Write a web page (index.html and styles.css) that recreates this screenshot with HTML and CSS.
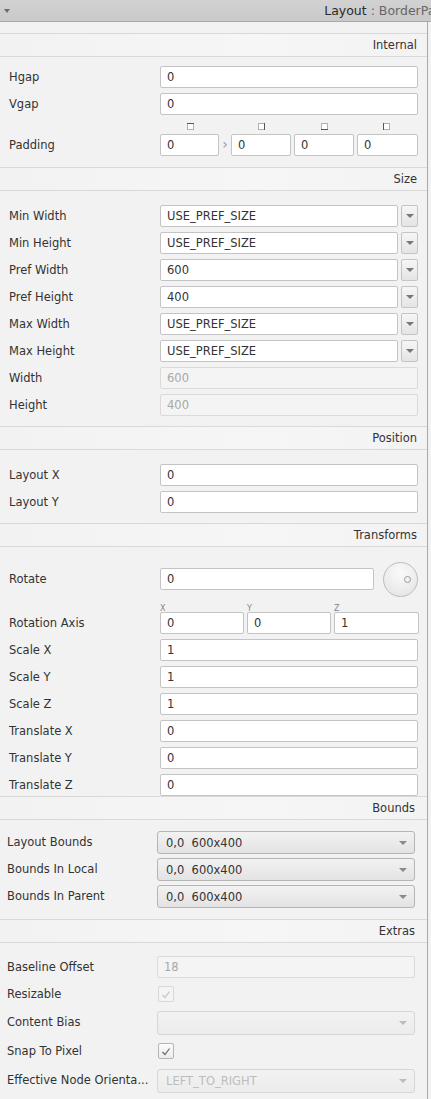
FILE: index.html
```html
<!DOCTYPE html>
<html>
<head>
<meta charset="utf-8">
<link rel="stylesheet" href="styles.css">
</head>
<body>
<div class="titlebar">
  <span class="tri"></span>
  <span class="title"><span class="t-main">Layout</span><span class="t-sub"> : BorderPane</span></span>
</div>
<div class="panel top">
  <div class="sec"><span>Internal</span></div>
  <div class="rows first-rows">
    <div class="row"><span class="lbl">Hgap</span><div class="field"><span class="tf">0</span></div></div>
    <div class="row"><span class="lbl">Vgap</span><div class="field"><span class="tf">0</span></div></div>
    <div class="pad-icons">
      <svg width="7" height="7"><rect x="0.5" y="0.5" width="6" height="6" fill="#fff" stroke="#b0b0b0"/><line x1="0" y1="0.5" x2="7" y2="0.5" stroke="#555"/></svg>
      <svg width="7" height="7"><rect x="0.5" y="0.5" width="6" height="6" fill="#fff" stroke="#b0b0b0"/><line x1="6.5" y1="0" x2="6.5" y2="7" stroke="#555"/></svg>
      <svg width="7" height="7"><rect x="0.5" y="0.5" width="6" height="6" fill="#fff" stroke="#b0b0b0"/><line x1="0" y1="6.5" x2="7" y2="6.5" stroke="#555"/></svg>
      <svg width="7" height="7"><rect x="0.5" y="0.5" width="6" height="6" fill="#fff" stroke="#b0b0b0"/><line x1="0.5" y1="0" x2="0.5" y2="7" stroke="#555"/></svg>
    </div>
    <div class="row"><span class="lbl">Padding</span>
      <div class="field padding">
        <span class="tf">0</span><span class="chev">›</span><span class="tf">0</span><span class="tf">0</span><span class="tf">0</span>
      </div>
    </div>
  </div>

  <div class="sec"><span>Size</span></div>
  <div class="rows">
    <div class="row"><span class="lbl">Min Width</span><div class="field combo-ed"><span class="tf">USE_PREF_SIZE</span><span class="dd"></span></div></div>
    <div class="row"><span class="lbl">Min Height</span><div class="field combo-ed"><span class="tf">USE_PREF_SIZE</span><span class="dd"></span></div></div>
    <div class="row"><span class="lbl">Pref Width</span><div class="field combo-ed"><span class="tf">600</span><span class="dd"></span></div></div>
    <div class="row"><span class="lbl">Pref Height</span><div class="field combo-ed"><span class="tf">400</span><span class="dd"></span></div></div>
    <div class="row"><span class="lbl">Max Width</span><div class="field combo-ed"><span class="tf">USE_PREF_SIZE</span><span class="dd"></span></div></div>
    <div class="row"><span class="lbl">Max Height</span><div class="field combo-ed"><span class="tf">USE_PREF_SIZE</span><span class="dd"></span></div></div>
    <div class="row"><span class="lbl">Width</span><div class="field"><span class="tf dis">600</span></div></div>
    <div class="row"><span class="lbl">Height</span><div class="field"><span class="tf dis">400</span></div></div>
  </div>

  <div class="sec"><span>Position</span></div>
  <div class="rows">
    <div class="row"><span class="lbl">Layout X</span><div class="field"><span class="tf">0</span></div></div>
    <div class="row"><span class="lbl">Layout Y</span><div class="field"><span class="tf">0</span></div></div>
  </div>

  <div class="sec"><span>Transforms</span></div>
  <div class="rows rot">
    <div class="row rotate"><span class="lbl">Rotate</span>
      <div class="field knobrow"><span class="tf">0</span><span class="knob"><span class="dot"></span></span></div>
    </div>
    <div class="axis-lbls"><span>X</span><span>Y</span><span>Z</span></div>
    <div class="row tight"><span class="lbl">Rotation Axis</span>
      <div class="field axis"><span class="tf">0</span><span class="tf">0</span><span class="tf">1</span></div>
    </div>
    <div class="row"><span class="lbl">Scale X</span><div class="field"><span class="tf">1</span></div></div>
    <div class="row"><span class="lbl">Scale Y</span><div class="field"><span class="tf">1</span></div></div>
    <div class="row"><span class="lbl">Scale Z</span><div class="field"><span class="tf">1</span></div></div>
    <div class="row"><span class="lbl">Translate X</span><div class="field"><span class="tf">0</span></div></div>
    <div class="row"><span class="lbl">Translate Y</span><div class="field"><span class="tf">0</span></div></div>
    <div class="row"><span class="lbl">Translate Z</span><div class="field"><span class="tf">0</span></div></div>
  </div>
</div>

<div class="panel bottom">
  <div class="sec"><span>Bounds</span></div>
  <div class="rows bounds">
    <div class="row"><span class="lbl">Layout Bounds</span><div class="field"><span class="combo">0,0&nbsp; 600x400<span class="arr"></span></span></div></div>
    <div class="row"><span class="lbl">Bounds In Local</span><div class="field"><span class="combo">0,0&nbsp; 600x400<span class="arr"></span></span></div></div>
    <div class="row"><span class="lbl">Bounds In Parent</span><div class="field"><span class="combo">0,0&nbsp; 600x400<span class="arr"></span></span></div></div>
  </div>

  <div class="sec"><span>Extras</span></div>
  <div class="rows extras">
    <div class="row"><span class="lbl">Baseline Offset</span><div class="field"><span class="tf dis">18</span></div></div>
    <div class="row"><span class="lbl">Resizable</span><div class="field"><span class="cb dis"><svg width="10" height="9" viewBox="0 0 10 9"><path d="M1.5 5 L4 7.5 L8.5 1.5" fill="none" stroke="#c4c4c4" stroke-width="1.2"/></svg></span></div></div>
    <div class="row tall"><span class="lbl">Content Bias</span><div class="field"><span class="combo dis"><span class="arr"></span></span></div></div>
    <div class="row tall"><span class="lbl">Snap To Pixel</span><div class="field"><span class="cb"><svg width="10" height="9" viewBox="0 0 10 9"><path d="M1.5 5 L4 7.5 L8.5 1.5" fill="none" stroke="#6a6a6a" stroke-width="1.2"/></svg></span></div></div>
    <div class="row tall"><span class="lbl">Effective Node Orienta...</span><div class="field"><span class="combo dis">LEFT_TO_RIGHT<span class="arr"></span></span></div></div>
  </div>
</div>
</body>
</html>
```

FILE: styles.css
```css
html, body {
  margin: 0;
  padding: 0;
  background: #f2f2f2;
}
body {
  width: 431px;
  height: 1099px;
  overflow: hidden;
  font-family: "DejaVu Sans", sans-serif;
  font-size: 11.5px;
  color: #333;
}
.titlebar {
  height: 22px;
  display: flex;
  align-items: center;
  justify-content: space-between;
  background: linear-gradient(#d2d2d2, #c9c9c9);
  border-bottom: 1px solid #a9a9a9;
  box-sizing: border-box;
  overflow: hidden;
  white-space: nowrap;
}
.tri {
  width: 0;
  height: 0;
  margin-left: 4px;
  border-left: 3px solid transparent;
  border-right: 3px solid transparent;
  border-top: 4px solid #6c6c6c;
}
.title {
  font-size: 12.5px;
  margin-right: -20px;
}
.t-main { color: #2a2a2a; }
.t-sub { color: #666; }

.panel {
  width: 427px;
  border-right: 1px solid #a8a8a8;
}
.panel.top { padding-top: 11px; }
.panel.bottom { padding-bottom: 8px; }
.sec {
  height: 22px;
  border-top: 1px solid #d9d9d9;
  border-bottom: 1px solid #d9d9d9;
  display: flex;
  align-items: center;
  justify-content: flex-end;
  padding-right: 10px;
  background: linear-gradient(90deg, #f2f2f2 0%, #f6f6f6 60%, #f3f3f3 100%);
  color: #333;
}
.panel.bottom .sec { padding-right: 12px; }
.rows {
  display: flex;
  flex-direction: column;
  padding: 14px 9px 10px 9px;
  gap: 5px;
}
.rows.first-rows { padding-top: 9px; padding-bottom: 11px; }
.panel.bottom .rows { padding-left: 7px; padding-right: 12px; }
.rows.rot { padding-top: 14px; padding-bottom: 0; }
.rows.bounds { padding-top: 11px; padding-bottom: 12px; }
.rows.extras { padding-top: 13px; gap: 5px; }

.row {
  display: grid;
  grid-template-columns: 151px 1fr;
  align-items: center;
  height: 22px;
}
.panel.bottom .row { grid-template-columns: 150px 1fr; }
.row.tall { height: 24px; }
.lbl { white-space: nowrap; }
.field { display: flex; height: 22px; align-items: stretch; }
.tf {
  flex: 1;
  box-sizing: border-box;
  height: 22px;
  background: #fff;
  border: 1px solid #c4c4c4;
  border-radius: 2px;
  padding: 0 6px;
  display: flex;
  align-items: center;
  white-space: nowrap;
}
.tf.dis {
  background: #f4f4f4;
  border-color: #dadada;
  color: #a8a8a8;
}
.combo-ed { gap: 3px; }
.dd {
  width: 17px;
  box-sizing: border-box;
  border: 1px solid #c4c4c4;
  border-radius: 2px;
  background: linear-gradient(#f6f6f6, #e4e4e4);
  position: relative;
}
.dd::after, .arr::after {
  content: "";
  position: absolute;
  left: 50%;
  top: 50%;
  margin-left: -4px;
  margin-top: -2px;
  border-left: 4px solid transparent;
  border-right: 4px solid transparent;
  border-top: 4px solid #777;
}
.arr::after { border-top-color: #8a8a8a; }

.pad-icons {
  display: flex;
  margin-left: 151px;
  height: 7px;
  margin-top: 3px;
  margin-bottom: -1px;
}
.pad-icons svg { display: block; }
.pad-icons svg:nth-child(1) { margin-left: 27px; }
.pad-icons svg:nth-child(2) { margin-left: 64px; }
.pad-icons svg:nth-child(3) { margin-left: 56px; }
.pad-icons svg:nth-child(4) { margin-left: 55px; }
.padding { gap: 3px; }
.padding .tf { flex: 0 0 auto; width: 60px; }
.padding .tf:first-child { width: 59px; }
.padding .tf:last-child { width: 61px; }
.chev {
  width: 6px;
  color: #999;
  display: flex;
  align-items: center;
  justify-content: center;
  font-size: 14px;
  padding-bottom: 2px;
}
.row.tight { margin-top: -2px; }

.row.rotate { height: 36px; }
.knobrow { height: 36px; align-items: center; gap: 9px; }
.knob {
  width: 35px;
  height: 35px;
  box-sizing: border-box;
  border-radius: 50%;
  border: 1px solid #bdbdbd;
  background: radial-gradient(circle at 50% 30%, #fafafa, #e2e2e2);
  position: relative;
  flex: 0 0 auto;
}
.dot {
  position: absolute;
  right: 6px;
  top: 50%;
  margin-top: -3px;
  width: 7px;
  height: 7px;
  box-sizing: border-box;
  border-radius: 50%;
  border: 1px solid #999;
}
.axis-lbls {
  display: flex;
  margin-left: 151px;
  font-size: 8px;
  color: #888;
  height: 9px;
  line-height: 9px;
  margin-top: 2px;
  margin-bottom: -4px;
}
.axis-lbls span:nth-child(1) { width: 87px; }
.axis-lbls span:nth-child(2) { width: 87px; }
.axis { gap: 3px; }
.axis .tf { flex: 0 0 auto; width: 84px; }
.axis .tf:last-child { width: 85px; }

.combo {
  flex: 1;
  position: relative;
  box-sizing: border-box;
  height: 23px;
  border: 1px solid #b5b5b5;
  border-radius: 3px;
  background: linear-gradient(#f2f2f2, #e3e3e3);
  padding: 0 8px;
  display: flex;
  align-items: center;
}
.combo .arr {
  position: absolute;
  right: 1px;
  top: 0;
  bottom: 0;
  width: 20px;
}
.combo.dis {
  height: 24px;
  border-color: #d6d6d6;
  background: linear-gradient(#f2f2f2, #ececec);
  color: #bdbdbd;
}
.combo.dis .arr::after { border-top-color: #bdbdbd; }
.cb {
  width: 16px;
  height: 16px;
  box-sizing: border-box;
  margin-left: 1px;
  align-self: center;
  border: 1px solid #b5b5b5;
  border-radius: 2px;
  background: linear-gradient(#fbfbfb, #ececec);
  display: flex;
  align-items: center;
  justify-content: center;
}
.cb.dis { border-color: #d8d8d8; background: #f4f4f4; }
```
